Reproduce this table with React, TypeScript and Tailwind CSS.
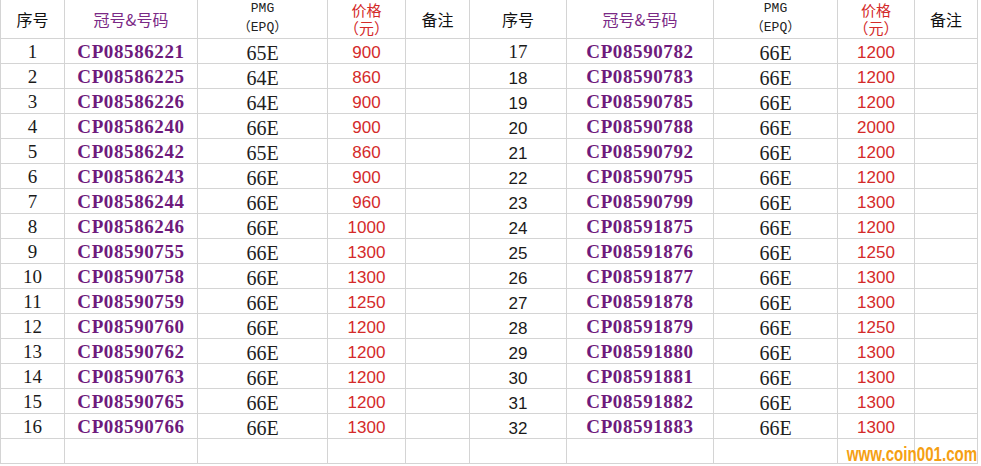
import React from "react";

const left: [string, string, string, string][] = [
  ["1", "CP08586221", "65E", "900"],
  ["2", "CP08586225", "64E", "860"],
  ["3", "CP08586226", "64E", "900"],
  ["4", "CP08586240", "66E", "900"],
  ["5", "CP08586242", "65E", "860"],
  ["6", "CP08586243", "66E", "900"],
  ["7", "CP08586244", "66E", "960"],
  ["8", "CP08586246", "66E", "1000"],
  ["9", "CP08590755", "66E", "1300"],
  ["10", "CP08590758", "66E", "1300"],
  ["11", "CP08590759", "66E", "1250"],
  ["12", "CP08590760", "66E", "1200"],
  ["13", "CP08590762", "66E", "1200"],
  ["14", "CP08590763", "66E", "1200"],
  ["15", "CP08590765", "66E", "1200"],
  ["16", "CP08590766", "66E", "1300"],
];

const right: [string, string, string, string][] = [
  ["17", "CP08590782", "66E", "1200"],
  ["18", "CP08590783", "66E", "1200"],
  ["19", "CP08590785", "66E", "1200"],
  ["20", "CP08590788", "66E", "2000"],
  ["21", "CP08590792", "66E", "1200"],
  ["22", "CP08590795", "66E", "1200"],
  ["23", "CP08590799", "66E", "1300"],
  ["24", "CP08591875", "66E", "1200"],
  ["25", "CP08591876", "66E", "1250"],
  ["26", "CP08591877", "66E", "1300"],
  ["27", "CP08591878", "66E", "1300"],
  ["28", "CP08591879", "66E", "1250"],
  ["29", "CP08591880", "66E", "1300"],
  ["30", "CP08591881", "66E", "1300"],
  ["31", "CP08591882", "66E", "1300"],
  ["32", "CP08591883", "66E", "1300"],
];

const cell = "border-r border-b border-[#d4d4d4] flex items-center justify-center whitespace-nowrap";
const cjk = "font-['Noto_Sans_CJK_SC',sans-serif] text-[16px] leading-[17px]";
const serif = "font-['Liberation_Serif','Times_New_Roman',serif]";

function HeaderHalf({ first }: { first: boolean }) {
  return (
    <>
      <div className={`${cell} ${first ? "border-l" : ""} text-[#111] ${cjk}`}>序号</div>
      <div className={`${cell} text-[#7b2a86] ${cjk}`}>冠号&amp;号码</div>
      <div className={`${cell} flex-col text-[#222] font-['Liberation_Mono',monospace] text-[13px] leading-[17px] pb-[2px]`}>
        <span>PMG</span>
        <span>
          <span className="font-['Noto_Sans_CJK_SC',sans-serif]">（</span>EPQ
          <span className="font-['Noto_Sans_CJK_SC',sans-serif]">）</span>
        </span>
      </div>
      <div className={`${cell} flex-col text-[#d42a2a] font-['Noto_Sans_CJK_SC',sans-serif] text-[15px] leading-[18px] pb-[1px]`}>
        <span>价格</span>
        <span>（元）</span>
      </div>
      <div className={`${cell} text-[#111] ${cjk}`}>备注</div>
    </>
  );
}

function Half({ row, first, sansIndex }: { row?: [string, string, string, string]; first: boolean; sansIndex: boolean }) {
  const idxClass = sansIndex
    ? "font-['Liberation_Sans',Arial,sans-serif] text-[17px] pt-[5px]"
    : `${serif} text-[19px] pt-[3px]`;
  return (
    <>
      <div className={`${cell} ${first ? "border-l" : ""} text-[#1a1a1a] ${idxClass}`}>{row?.[0] ?? ""}</div>
      <div className={`${cell} ${serif} font-bold text-[19px] tracking-[0.6px] text-[#6e1a7c] pt-[3px]`}>{row?.[1] ?? ""}</div>
      <div className={`${cell} ${serif} text-[20px] text-[#1e1e1e] pt-[3px]`}>{row?.[2] ?? ""}</div>
      <div className={`${cell} font-['Liberation_Sans',Arial,sans-serif] text-[17px] text-[#d42a2a] pt-[3px]`}>{row?.[3] ?? ""}</div>
      <div className={cell}></div>
    </>
  );
}

export default function App() {
  const rows = Array.from({ length: 17 }, (_, i) => i);
  return (
    <div className="relative w-[981px] h-[466px] bg-white overflow-hidden">
      <div className="grid grid-cols-[65px_133px_130px_78px_64px_97px_147px_124px_77px_63px] grid-rows-[39px_repeat(17,25px)] w-[978px]">
        <HeaderHalf first={true} />
        <HeaderHalf first={false} />
        {rows.map((i) => (
          <React.Fragment key={i}>
            <Half row={left[i]} first={true} sansIndex={false} />
            <Half row={right[i]} first={false} sansIndex={i > 0} />
          </React.Fragment>
        ))}
      </div>
      <div className="absolute right-[4px] bottom-[2px] origin-right scale-x-[0.72] font-['Liberation_Sans',Arial,sans-serif] font-bold text-[21px] leading-[21px] text-[#f5a012]">
        www.coin001.com
      </div>
    </div>
  );
}
